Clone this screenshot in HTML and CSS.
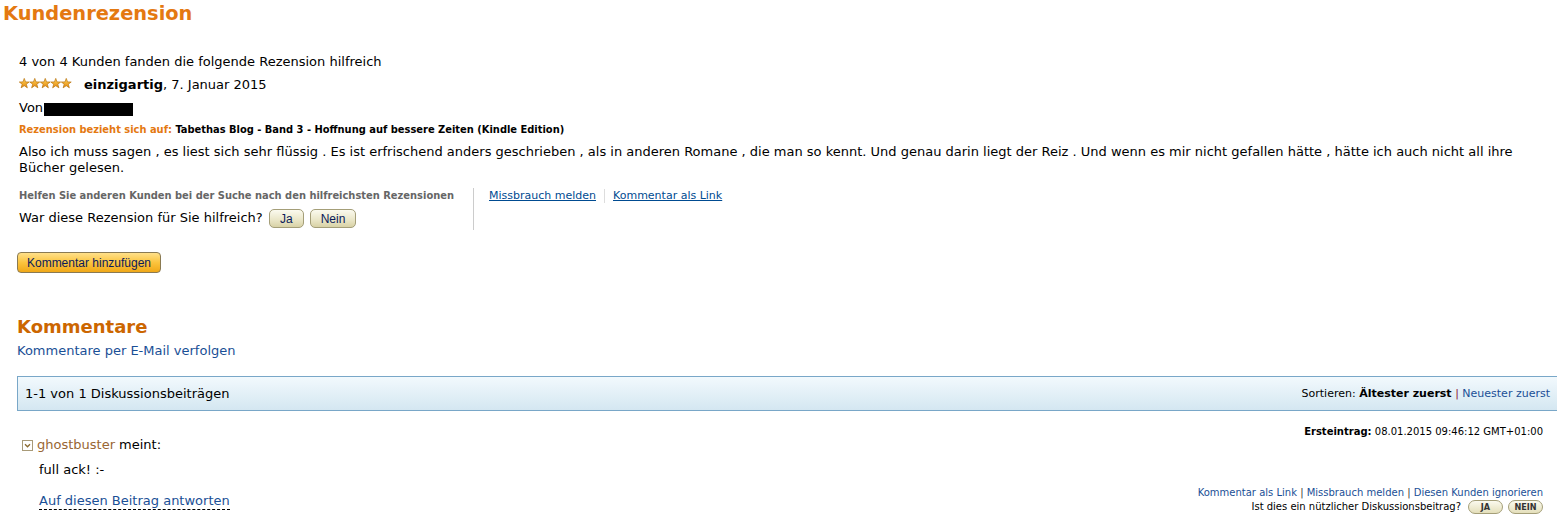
FILE: index.html
```html
<!DOCTYPE html>
<html lang="de">
<head>
<meta charset="utf-8">
<title>Kundenrezension</title>
<link rel="stylesheet" href="styles.css">
</head>
<body>
<h1 class="page-title">Kundenrezension</h1>
<div class="review">
  <div class="helpful-count">4 von 4 Kunden fanden die folgende Rezension hilfreich</div>
  <div class="rating-line">
    <svg class="stars" width="53" height="11" viewBox="0 0 53 11">
      <defs>
        <linearGradient id="sg" x1="0" y1="0" x2="0" y2="1">
          <stop offset="0" stop-color="#ffd35a"/>
          <stop offset="1" stop-color="#e58a0e"/>
        </linearGradient>
        <path id="st" d="M5.25 0.4 L6.55 3.9 L10.2 4 L7.3 6.2 L8.35 9.8 L5.25 7.7 L2.15 9.8 L3.2 6.2 L0.3 4 L3.95 3.9 Z"/>
      </defs>
      <use href="#st" x="0" fill="url(#sg)" stroke="#b8720f" stroke-width="0.7"/>
      <use href="#st" x="10.5" fill="url(#sg)" stroke="#b8720f" stroke-width="0.7"/>
      <use href="#st" x="21" fill="url(#sg)" stroke="#b8720f" stroke-width="0.7"/>
      <use href="#st" x="31.5" fill="url(#sg)" stroke="#b8720f" stroke-width="0.7"/>
      <use href="#st" x="42" fill="url(#sg)" stroke="#b8720f" stroke-width="0.7"/>
    </svg>
    <span class="review-title">einzigartig</span>, 7. Januar 2015
  </div>
  <div class="author-line">Von <span class="redacted"></span></div>
  <div class="product-ref"><span class="ref-label">Rezension bezieht sich auf:</span> Tabethas Blog - Band 3 - Hoffnung auf bessere Zeiten (Kindle Edition)</div>
  <p class="review-text">Also ich muss sagen , es liest sich sehr flüssig . Es ist erfrischend anders geschrieben , als in anderen Romane , die man so kennt. Und genau darin liegt der Reiz . Und wenn es mir nicht gefallen hätte , hätte ich auch nicht all ihre Bücher gelesen.</p>
  <div class="vote-row">
    <div class="vote-left">
      <div class="vote-hint">Helfen Sie anderen Kunden bei der Suche nach den hilfreichsten Rezensionen</div>
      <div class="vote-question">War diese Rezension für Sie hilfreich? <button class="btn-vote">Ja</button> <button class="btn-vote">Nein</button></div>
    </div>
    <div class="vote-links">
      <a href="#" class="small-link">Missbrauch melden</a><span class="link-sep"></span><a href="#" class="small-link">Kommentar als Link</a>
    </div>
  </div>
  <button class="btn-comment">Kommentar hinzufügen</button>
</div>

<section class="comments">
  <h2 class="comments-title">Kommentare</h2>
  <a href="#" class="follow-link">Kommentare per E-Mail verfolgen</a>
  <div class="discussion-bar">
    <span class="bar-count">1-1 von 1 Diskussionsbeiträgen</span>
    <span class="bar-sort">Sortieren: <b>Ältester zuerst</b> <span class="pipe">|</span> <a href="#" class="sort-link">Neuester zuerst</a></span>
  </div>
  <div class="post">
    <div class="post-date"><b>Ersteintrag:</b> 08.01.2015 09:46:12 GMT+01:00</div>
    <div class="post-author">
      <svg class="collapse" width="11" height="11" viewBox="0 0 11 11">
        <rect x="0.5" y="0.5" width="10" height="10" fill="#fff" stroke="#a89a78"/>
        <path d="M3 4.2 L5.5 6.8 L8 4.2" fill="none" stroke="#8a6a30" stroke-width="1.3"/>
      </svg>
      <span class="author-name">ghostbuster</span> meint:
    </div>
    <div class="post-body">full ack! :-</div>
    <div class="post-footer">
      <a href="#" class="reply-link">Auf diesen Beitrag antworten</a>
      <div class="post-actions">
        <div class="action-links"><a href="#">Kommentar als Link</a> <span class="apipe">|</span> <a href="#">Missbrauch melden</a> <span class="apipe">|</span> <a href="#">Diesen Kunden ignorieren</a></div>
        <div class="action-vote">Ist dies ein nützlicher Diskussionsbeitrag? <button class="btn-pill">JA</button><button class="btn-pill">NEIN</button></div>
      </div>
    </div>
  </div>
</section>
</body>
</html>
```

FILE: styles.css
```css
html, body {
  margin: 0;
  padding: 0;
  background: #fff;
  overflow: hidden;
}
body {
  font-family: "DejaVu Sans", Verdana, sans-serif;
  font-size: 13px;
  color: #000;
}
a { text-decoration: none; }

.page-title {
  margin: 0;
  padding: 2px 0 0 3px;
  font-size: 19.4px;
  line-height: 24px;
  font-weight: bold;
  color: #e47911;
}

.review {
  padding: 27px 0 0 19px;
}
.helpful-count {
  line-height: 18px;
}
.rating-line {
  margin-top: 5px;
  line-height: 18px;
  display: flex;
  align-items: center;
}
.stars {
  margin-right: 12px;
  margin-top: -3px;
}
.review-title { font-weight: bold; }
.author-line {
  margin-top: 5px;
  line-height: 18px;
  display: flex;
  align-items: center;
}
.redacted {
  display: inline-block;
  width: 89px;
  height: 13px;
  background: #000;
  margin-left: 1px;
  margin-top: 2px;
}
.product-ref {
  margin-top: 5px;
  font-family: "DejaVu Sans Condensed", "DejaVu Sans", sans-serif;
  font-size: 11px;
  font-weight: bold;
  line-height: 15px;
}
.ref-label { color: #e47911; }
.review-text {
  margin: 7px 0 0 0;
  line-height: 16px;
  padding-right: 10px;
}

.vote-row {
  margin-top: 12px;
  display: flex;
  align-items: stretch;
}
.vote-left {
  padding-right: 19px;
  border-right: 1px solid #ccc;
}
.vote-hint {
  font-family: "DejaVu Sans Condensed", "DejaVu Sans", sans-serif;
  font-size: 11px;
  font-weight: bold;
  color: #666;
  line-height: 16px;
}
.vote-question {
  margin-top: 4px;
  font-size: 13px;
  line-height: 20px;
  padding-bottom: 2px;
}
.btn-vote {
  font-family: "Liberation Sans Narrow", "Liberation Sans", sans-serif;
  font-size: 12px;
  color: #0a1a5a;
  height: 19px;
  padding: 0 10px;
  border: 1px solid #a49e78;
  border-radius: 5px;
  background: linear-gradient(#fbfaef, #e9e5c6 60%, #d8d2a6);
  vertical-align: middle;
  margin-left: 2px;
  cursor: pointer;
}
.vote-links {
  padding-left: 15px;
  padding-top: 1px;
  display: flex;
  align-items: flex-start;
}
.small-link {
  font-size: 11px;
  color: #004b91;
  text-decoration: underline;
  line-height: 13px;
}
.link-sep {
  width: 1px;
  height: 14px;
  background: #ddd;
  margin: 0 8px;
}

.btn-comment {
  margin: 22px 0 0 -2px;
  display: block;
  height: 21px;
  width: 144px;
  padding: 0;
  font-family: "Liberation Sans Narrow", "Liberation Sans", sans-serif;
  font-size: 12px;
  color: #0a1a5a;
  border: 1px solid #8a7a52;
  border-radius: 4px;
  background: linear-gradient(#ffe08a, #fbc43e 50%, #f0a818);
  cursor: pointer;
}

.comments {
  padding: 43px 0 0 17px;
}
.comments-title {
  margin: 0;
  font-size: 18px;
  line-height: 22px;
  color: #cc6600;
  font-weight: bold;
}
.follow-link {
  display: block;
  margin-top: 5px;
  color: #1a4f96;
  line-height: 16px;
}
.discussion-bar {
  margin-top: 17px;
  height: 33px;
  border: 1px solid #79a7c8;
  border-right: none;
  background: linear-gradient(#f2f9fd, #d4e7f1);
  display: flex;
  align-items: center;
  justify-content: space-between;
  padding: 0 7px 0 7px;
}
.bar-sort {
  font-size: 11px;
}
.pipe { color: #8a1a3a; }
.sort-link { color: #1a4f96; }

.post {
  padding: 14px 14px 0 5px;
}
.post-date {
  text-align: right;
  font-size: 10px;
  line-height: 14px;
}
.post-author {
  margin-top: -3px;
  display: flex;
  align-items: center;
  gap: 4px;
  line-height: 18px;
}
.author-name { color: #996633; }
.post-body {
  margin-top: 7px;
  padding-left: 17px;
  line-height: 18px;
}
.post-footer {
  margin-top: 7px;
  display: flex;
  justify-content: space-between;
  align-items: flex-start;
}
.reply-link {
  margin-left: 17px;
  margin-top: 7px;
  color: #1a4f96;
  line-height: 16px;
  border-bottom: 1px dashed #000;
}
.post-actions {
  text-align: right;
  font-size: 10px;
}
.action-links {
  line-height: 13px;
  color: #333;
}
.action-links a { color: #1a4f96; }
.apipe { color: #333; }
.action-vote {
  line-height: 15px;
  display: flex;
  align-items: center;
  justify-content: flex-end;
}
.btn-pill {
  font-family: "DejaVu Sans Condensed", "DejaVu Sans", sans-serif;
  font-size: 9px;
  font-weight: bold;
  color: #333;
  width: 35px;
  height: 14px;
  padding: 0;
  border: 1px solid #a49e78;
  border-radius: 7px;
  background: linear-gradient(#fbfaef, #e4dfba);
  margin-left: 5px;
  line-height: 12px;
  cursor: pointer;
}
.btn-pill:first-child { margin-left: 7px; }
```
